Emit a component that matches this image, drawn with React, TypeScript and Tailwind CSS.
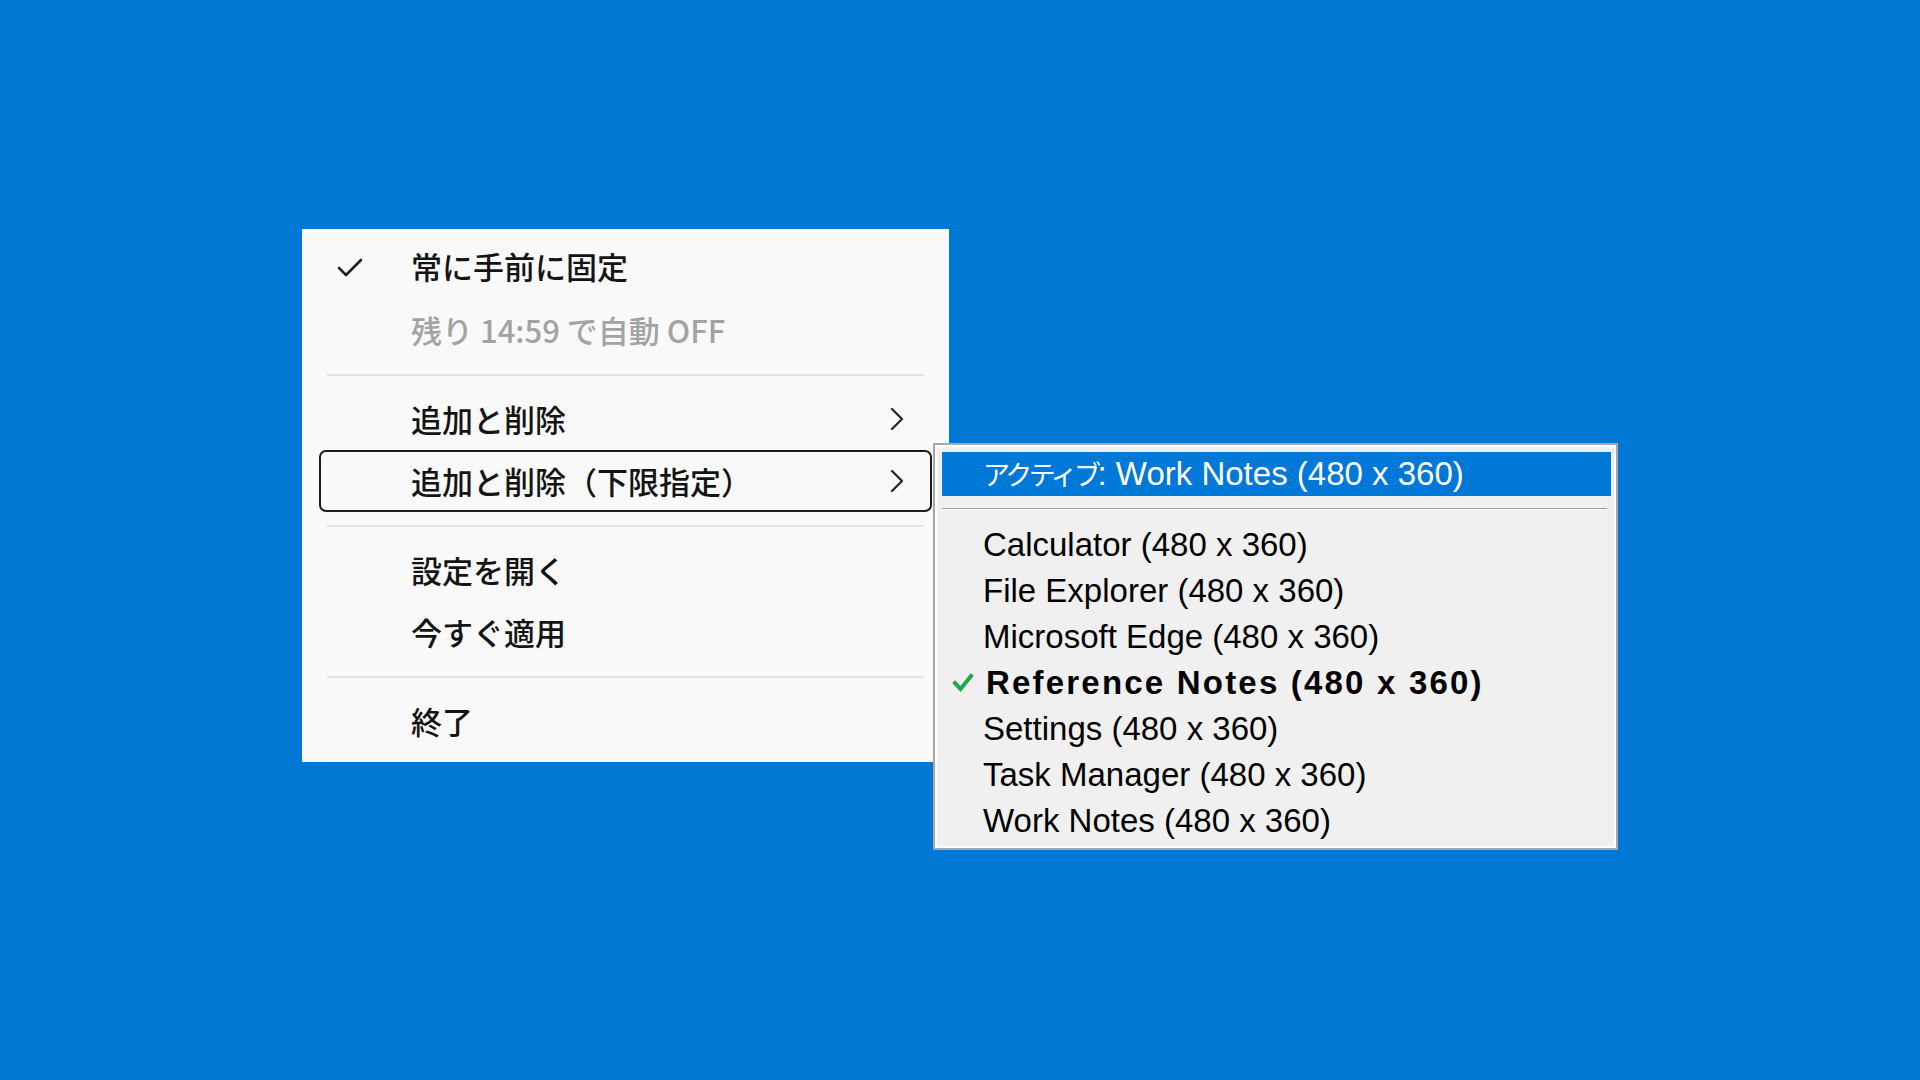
import React from 'react';

type MenuRow =
  | { kind: 'item'; label: string; checked?: boolean; disabled?: boolean; sub?: boolean; focused?: boolean }
  | { kind: 'sep' };

const mainRows: MenuRow[] = [
  { kind: 'item', label: '常に手前に固定', checked: true },
  { kind: 'item', label: '残り 14:59 で自動 OFF', disabled: true },
  { kind: 'sep' },
  { kind: 'item', label: '追加と削除', sub: true },
  { kind: 'item', label: '追加と削除（下限指定）', sub: true, focused: true },
  { kind: 'sep' },
  { kind: 'item', label: '設定を開く' },
  { kind: 'item', label: '今すぐ適用' },
  { kind: 'sep' },
  { kind: 'item', label: '終了' },
];

const windows = [
  'Calculator',
  'File Explorer',
  'Microsoft Edge',
  'Reference Notes',
  'Settings',
  'Task Manager',
  'Work Notes',
];

const selected = 'Reference Notes';

function Check() {
  return (
    <svg width="26" height="20" viewBox="0 0 26 20">
      <path d="M2 10 L9 17 L24 2" fill="none" stroke="#1f1f1f" strokeWidth="2.6" strokeLinecap="round" strokeLinejoin="round" />
    </svg>
  );
}

function Chevron() {
  return (
    <svg width="14" height="24" viewBox="0 0 14 24">
      <path d="M2 2 L12 12 L2 22" fill="none" stroke="#2b2b2b" strokeWidth="2.4" strokeLinecap="round" strokeLinejoin="round" />
    </svg>
  );
}

function GreenCheck() {
  return (
    <svg width="22" height="22" viewBox="0 0 22 22">
      <path d="M3 11 L8.5 17 L19 4" fill="none" stroke="#1ea64a" strokeWidth="4" strokeLinecap="square" />
    </svg>
  );
}

export default function App() {
  return (
    <div className="relative w-full h-screen overflow-hidden bg-[#0078d4]">
      {/* main tray menu */}
      <div
        className="absolute left-[302px] top-[229px] w-[647px] flex flex-col bg-[#f9f9f9] pt-[8px] pb-[10px] text-[31px] text-[#141414]"
        style={{ fontFamily: '"Noto Sans CJK JP", "Noto Sans", sans-serif' }}
      >
        {mainRows.map((row, i) =>
          row.kind === 'sep' ? (
            <div key={i} className="h-[27px] flex items-center px-[25px]">
              <div className="h-[2px] w-full bg-[#e3e3e3]" />
            </div>
          ) : (
            <div
              key={i}
              className={`mx-[17px] h-[62px] flex items-center pr-[26px] rounded-[7px] border-2 ${
                row.focused ? 'border-[#1c1c1c]' : 'border-transparent'
              } ${row.disabled ? 'text-[#a3a3a3]' : ''}`}
            >
              <div className="w-[90px] shrink-0 flex items-center pl-[16px]">{row.checked && <Check />}</div>
              <span className={`flex-1 leading-none font-medium ${i === 0 ? 'pb-[5px]' : 'pb-[2px]'}`}>
                {row.label}
              </span>
              {row.sub && <Chevron />}
            </div>
          )
        )}
      </div>

      {/* classic submenu */}
      <div
        className="absolute left-[933px] top-[443px] w-[685px] flex flex-col bg-[#f0f0f0] border-2 border-[#a7a7a7] shadow-[inset_0_0_0_2px_#ffffff] pt-[7px] pl-[7px] pr-[5px] pb-[4px] text-[33px] text-black"
        style={{ fontFamily: '"Liberation Sans", Arial, sans-serif' }}
      >
        <div className="h-[44px] bg-[#0078d7] text-white flex items-center pl-[41px] whitespace-nowrap">
          <span
            className="text-[27px] tracking-[-3.5px]"
            style={{ fontFamily: '"Noto Sans CJK JP", sans-serif' }}
          >
            アクティブ
          </span>
          <span>: Work Notes (480 x 360)</span>
        </div>
        <div className="h-[26px] flex items-center pr-[4px]">
          <div className="w-full h-[2px] border-t border-[#a0a0a0] bg-white" />
        </div>
        {windows.map((name) => (
          <div key={name} className="h-[46px] flex items-center whitespace-nowrap">
            <div className="w-[41px] shrink-0 flex items-center pl-[10px]">{name === selected && <GreenCheck />}</div>
            <span className={name === selected ? 'font-bold tracking-[2.2px] pl-[3px]' : ''}>
              {name} (480 x 360)
            </span>
          </div>
        ))}
      </div>
    </div>
  );
}
